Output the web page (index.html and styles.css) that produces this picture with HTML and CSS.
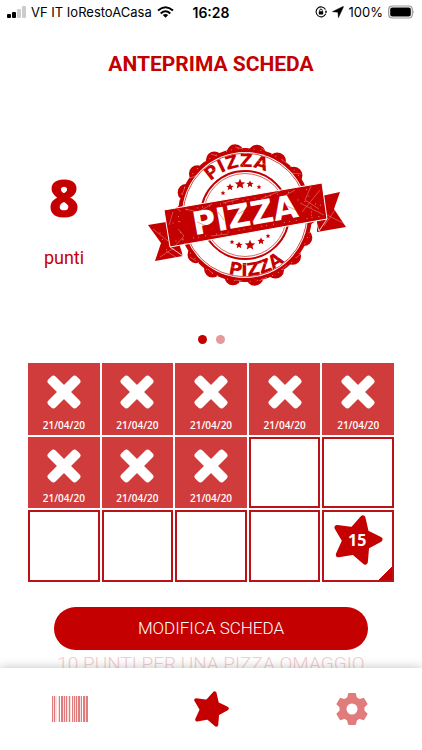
FILE: index.html
```html
<!DOCTYPE html>
<html lang="it">
<head>
    <meta charset="UTF-8">
    <meta name="viewport" content="width=device-width, initial-scale=1.0">
    <title>Anteprima scheda</title>
    <link rel="stylesheet" href="styles.css">
</head>
<body>
    <!-- Shared icons -->
    <svg class="sprite" aria-hidden="true">
        <symbol id="icon-cross" viewBox="0 0 34 34">
            <g transform="rotate(45 17 17)">
                <rect x="-3" y="12" width="40" height="10" rx="3"/>
                <rect x="12" y="-3" width="10" height="40" rx="3"/>
            </g>
        </symbol>
        <symbol id="icon-star" viewBox="0 0 146 150">
            <path d="M86 9 L96 53 L137 73 L97 95 L93 141 L58 111 L13 119 L32 77 L9 38 L55 44 Z" stroke="currentColor" stroke-width="16" stroke-linejoin="round"/>
        </symbol>
    </svg>

    <div class="status-bar">
        <div class="status-left">
            <svg width="19" height="12" viewBox="0 0 19 12">
                <rect x="0" y="8" width="4" height="4" rx="1"/>
                <rect x="5" y="6" width="4" height="6" rx="1"/>
                <rect x="10" y="3" width="4" height="9" rx="1" fill="#ccc"/>
                <rect x="15" y="0" width="4" height="12" rx="1" fill="#ccc"/>
            </svg>
            <span>VF IT IoRestoACasa</span>
            <svg width="17" height="12" viewBox="0 0 17 12" fill="none" stroke="#000" stroke-width="2">
                <path d="M1 4.6 Q8.5 -2 16 4.6" fill="none"/>
                <path d="M3.7 7.4 Q8.5 3.2 13.3 7.4" fill="none"/>
                <path d="M8.5 11.8 L5.8 9 Q8.5 7 11.2 9 Z" fill="#000" stroke="none"/>
            </svg>
        </div>
        <span class="status-time">16:28</span>
        <div class="status-right">
            <svg width="12" height="12" viewBox="0 0 12 12">
                <path d="M10.5 3.5 A5 5 0 1 0 10.7 7.8 M11 4.5 V6.5" fill="none" stroke="#000" stroke-width="1.1"/>
                <path d="M9.8 5.5 H12 L11 7.5 Z"/>
                <rect x="3.8" y="5.3" width="4.4" height="3.3" rx="0.5"/>
                <path d="M4.7 5.5 V4.4 A1.3 1.3 0 0 1 7.3 4.4 V5.5" fill="none" stroke="#000" stroke-width="0.9"/>
            </svg>
            <svg width="12" height="12" viewBox="0 0 11 11">
                <path d="M0.3 5.2 L10 0.5 Q10.7 0.3 10.5 1 L5.900 10.7 L5.4 5.7 Z" stroke="#000" stroke-width="0.4"/>
            </svg>
            <span>100%</span>
            <svg width="27" height="14" viewBox="0 0 27 14">
                <rect x="0.7" y="1" width="23.6" height="12" rx="3.5" fill="#fff" stroke="#999" stroke-width="1.2"/>
                <rect x="2.2" y="2.5" width="20.6" height="9" rx="2"/>
                <path d="M25.5 5 Q27 7 25.5 9 Z" fill="#999"/>
            </svg>
        </div>
    </div>

    <header>
        <h1>ANTEPRIMA SCHEDA</h1>
    </header>

    <main>
        <section class="summary">
            <div class="points">
                <strong>8</strong>
                <span>punti</span>
            </div>
            <svg class="stamp" viewBox="0 0 220 170" role="img" aria-label="Pizza">
                <defs>
                    <path id="arc-top" d="M57 85 A48 48 0 0 1 153 85"/>
                    <path id="arc-bottom" d="M44 85 A61 61 0 0 0 166 85"/>
                    <path id="small-star" d="M0 -4 L1.2 -1.3 L4 -1.2 L1.9 0.6 L2.5 3.5 L0 1.9 L-2.5 3.5 L-1.9 0.6 L-4 -1.2 L-1.2 -1.3 Z"/>
                </defs>
                <!-- Scalloped seal -->
                <circle cx="105" cy="85" r="67"/>
                <circle cx="105" cy="85" r="63" fill="none" stroke="#c40000" stroke-width="17" stroke-linecap="round" pathLength="18" stroke-dasharray="0 1" transform="rotate(1 105 85)"/>
                <circle cx="105" cy="85" r="63" fill="#fff"/>
                <circle cx="105" cy="85" r="61.8" fill="none" stroke="#c40000" stroke-width="0.7"/>
                <circle cx="105" cy="85" r="44" fill="#fff" stroke="#c40000" stroke-width="2"/>
                <circle cx="105" cy="85" r="41.5" fill="none" stroke="#c40000" stroke-width="0.6"/>
                <text class="arc-text" text-anchor="middle" transform="rotate(-10 105 85)"><textPath href="#arc-top" startOffset="50%">PIZZA</textPath></text>
                <text class="arc-text" text-anchor="middle" transform="rotate(-12 105 85)"><textPath href="#arc-bottom" startOffset="50%">PIZZA</textPath></text>
                <use href="#small-star" transform="translate(83 63) scale(.6)"/>
                <use href="#small-star" transform="translate(90 57) scale(.9)"/>
                <use href="#small-star" transform="translate(100 54) scale(1.3)"/>
                <use href="#small-star" transform="translate(110 54) scale(.9)"/>
                <use href="#small-star" transform="translate(119 57) scale(.6)"/>
                <use href="#small-star" transform="translate(92 112) scale(.6)"/>
                <use href="#small-star" transform="translate(99 115) scale(.9)"/>
                <use href="#small-star" transform="translate(110 115) scale(1.3)"/>
                <use href="#small-star" transform="translate(121 111) scale(.9)"/>
                <use href="#small-star" transform="translate(128 106) scale(.6)"/>
                <!-- Ribbon -->
                <path d="M8 95 L32 91 L43 126 L15 131 L21 113 Z"/>
                <path d="M177 67 L200 62 L194 79 L206 97 L177 102 Z"/>
                <path d="M24 80 L182 53 L187 89 L30 117 Z" stroke="#fff" stroke-width="1"/>
                <path d="M30 117 L43 126 L43 115 M187 89 L179 101 L176 91" fill="none" stroke="#fff" stroke-width="0.8"/>
                <text class="ribbon-text" x="107" y="96" text-anchor="middle" transform="rotate(-10 107 96)">PIZZA</text>
                <!-- Worn ink -->
                <g fill="none" stroke="#fff" stroke-width="0.5" opacity="0.6">
                    <path d="M33 82 L29 95 M45 79 L58 82 L72 74 M83 73 L99 69 M35 116 L44 106 L38 99 M71 106 L88 104 M121 69 L140 61 M146 65 L155 60"/>
                    <path d="M162 82 L180 60 M160 73 L184 85 M171 56 L165 70 L179 79 M184 96 L197 77 M187 85 L205 94"/>
                    <path d="M13 99 L28 111 M20 127 L34 118 M26 121 L39 129"/>
                    <path d="M50 48 L58 45 M60 32 L66 25 M71 24 L77 26 M95 17 L103 19 M121 18 L128 22 M142 30 L150 35 M151 43 L161 44 M42 65 L45 57 M50 127 L56 131 M68 139 L73 144 M95 150 L102 151 M119 151 L127 147 M141 140 L147 135 M157 127 L164 122"/>
                    <path d="M68 43 L76 39 M82 29 L87 37 M97 28 L104 36 M116 29 L126 35 M84 132 L96 139 M103 134 L113 138 M121 131 L129 136 M137 127 L144 128"/>
                </g>
                <g fill="none" stroke="#c40000" stroke-width="0.5" opacity="0.7">
                    <path d="M57 92 L69 97 M78 82 L84 90 M98 84 L107 79 M124 88 L134 83 M147 76 L156 80"/>
                </g>
                <g fill="none" stroke="#fff" stroke-linecap="round" stroke-width="0.8" stroke-dasharray="0 7 0 11 0 5" opacity="0.8">
                    <path d="M33 93 L50 90 M36 111 L182 86 M158 70 L184 76 M20 103 L28 123 M40 81 L150 62"/>
                    <circle cx="105" cy="85" r="66.5"/>
                </g>
            </svg>
        </section>

        <div class="pager">
            <button class="dot active" aria-label="Pagina 1"></button>
            <button class="dot" aria-label="Pagina 2"></button>
        </div>

        <section class="card">
            <div class="cell stamped"><svg><use href="#icon-cross"/></svg><span>21/04/20</span></div>
            <div class="cell stamped"><svg><use href="#icon-cross"/></svg><span>21/04/20</span></div>
            <div class="cell stamped"><svg><use href="#icon-cross"/></svg><span>21/04/20</span></div>
            <div class="cell stamped"><svg><use href="#icon-cross"/></svg><span>21/04/20</span></div>
            <div class="cell stamped"><svg><use href="#icon-cross"/></svg><span>21/04/20</span></div>
            <div class="cell stamped"><svg><use href="#icon-cross"/></svg><span>21/04/20</span></div>
            <div class="cell stamped"><svg><use href="#icon-cross"/></svg><span>21/04/20</span></div>
            <div class="cell stamped"><svg><use href="#icon-cross"/></svg><span>21/04/20</span></div>
            <div class="cell"></div>
            <div class="cell"></div>
            <div class="cell"></div>
            <div class="cell"></div>
            <div class="cell"></div>
            <div class="cell"></div>
            <div class="cell prize"><svg><use href="#icon-star"/></svg><span>15</span></div>
        </section>

        <button class="edit-button">MODIFICA SCHEDA</button>
        <p class="reward">10 PUNTI PER UNA PIZZA OMAGGIO</p>
    </main>

    <nav>
        <a href="#codice" aria-label="Codice a barre">
            <svg width="36" height="26" viewBox="0 0 36 26">
                <path d="M0 0h36v26h-36z" opacity="0.25"/>
                <path d="M0 0h1v26h-1z M2 0h1v26h-1z M7 0h1v26h-1z M9 0h2v26h-2z M12 0h1v26h-1z M14 0h1v26h-1z M17 0h1v26h-1z M20 0h1v26h-1z M22 0h1v26h-1z M24 0h1v26h-1z M26 0h2v26h-2z M29 0h1v26h-1z M31 0h2v26h-2z M34 0h2v26h-2z"/>
                <path d="M5 0h1v26h-1z M8 0h1v26h-1z M19 0h1v26h-1z M30 0h1v26h-1z" fill="#fff"/>
            </svg>
        </a>
        <a href="#scheda" class="active" aria-label="Scheda">
            <svg width="35" height="36"><use href="#icon-star"/></svg>
        </a>
        <a href="#impostazioni" aria-label="Impostazioni">
            <svg width="34" height="34" viewBox="-17 -17 34 34">
                <circle r="9" fill="none" stroke="currentColor" stroke-width="7"/>
                <path id="tooth" d="M-5 -11 L-4 -15 Q-4 -16 -3 -16 H3 Q4 -16 4 -15 L5 -11 Z"/>
                <use href="#tooth" transform="rotate(60)"/>
                <use href="#tooth" transform="rotate(120)"/>
                <use href="#tooth" transform="rotate(180)"/>
                <use href="#tooth" transform="rotate(240)"/>
                <use href="#tooth" transform="rotate(300)"/>
            </svg>
        </a>
    </nav>
</body>
</html>
```
FILE: styles.css
```css
* {
    margin: 0;
    padding: 0;
    box-sizing: border-box;
}

body {
    display: flex;
    flex-direction: column;
    height: 100vh;
    font-family: Roboto, 'Liberation Sans', sans-serif;
    color: #c40000;
    background-color: #fff;
}

svg {
    display: block;
    fill: currentColor;
}

button {
    border: none;
    font-family: inherit;
    cursor: pointer;
}

.sprite {
    position: absolute;
    width: 0;
    height: 0;
}

.status-bar {
    display: grid;
    grid-template-columns: 1fr auto 1fr;
    align-items: center;
    height: 24px;
    padding: 0 7px;
    font-family: Inter, sans-serif;
    font-size: 13px;
    color: #000;
}

.status-left,
.status-right {
    display: flex;
    align-items: center;
    gap: 5px;
    white-space: nowrap;
}

.status-right {
    justify-content: flex-end;
    gap: 5px;
}

.status-time {
    font-size: 14px;
    font-weight: 600;
}

header {
    padding: 25px 0 23px;
    text-align: center;
}

h1 {
    font-size: 21px;
    line-height: 30px;
}

main {
    flex: 1;
    min-height: 0;
    padding: 0 28px;
    overflow-y: auto;
    scrollbar-width: none;
}

.summary {
    display: flex;
    align-items: center;
    padding-top: 28px;
}

.points {
    display: flex;
    flex-direction: column;
    align-items: center;
    width: 72px;
    font-size: 18px;
}

.points strong {
    font-family: 'Open Sans', sans-serif;
    font-size: 52px;
    font-weight: 800;
    line-height: 68px;
    margin-bottom: 16px;
}

.stamp {
    width: 220px;
    margin-left: 40px;
    font-family: 'DejaVu Sans', sans-serif;
    font-weight: 700;
}

.arc-text {
    font-size: 18px;
}

.ribbon-text {
    font-size: 32px;
    fill: #fff;
}

.pager {
    display: flex;
    justify-content: center;
    gap: 9px;
    padding: 35px 0 19px;
}

.dot {
    width: 9px;
    height: 9px;
    border-radius: 50%;
    background-color: #e59999;
}

.dot.active {
    background-color: #c40000;
}

.card {
    display: grid;
    grid-template-columns: repeat(5, 1fr);
    gap: 2px;
}

.cell {
    display: flex;
    flex-direction: column;
    align-items: center;
    aspect-ratio: 1;
    border: 2px solid #b91218;
    font-family: 'Open Sans', sans-serif;
}

.cell.stamped {
    justify-content: space-between;
    padding: 10px 0 1px;
    border-color: #d03c3c;
    background-color: #d03c3c;
    color: #fff;
    font-size: 10px;
    font-weight: 600;
    line-height: 14px;
}

.stamped svg {
    width: 34px;
    height: 34px;
}

.cell.prize {
    display: grid;
    place-items: center;
    padding-bottom: 12px;
    background: linear-gradient(135deg, transparent 90%, #c40000 90%);
}

.prize svg,
.prize span {
    grid-area: 1 / 1;
}

.prize svg {
    width: 49px;
    height: 50px;
}

.prize span {
    padding-right: 2px;
    color: #fff;
    font-size: 16px;
    font-weight: 700;
}

.edit-button {
    display: block;
    width: calc(100% - 52px);
    height: 43px;
    margin: 25px auto 0;
    border-radius: 22px;
    background-color: #c40000;
    color: #fff;
    font-size: 17px;
    font-weight: 300;
}

.reward {
    color: #f4cccc;
    font-size: 19px;
    font-weight: 300;
    line-height: 28px;
    text-align: center;
    white-space: nowrap;
}

nav {
    display: flex;
    height: 82px;
    background-color: #fff;
    box-shadow: 0 0 10px rgba(0,0,0,0.25);
    z-index: 1;
}

nav a {
    display: flex;
    flex: 1;
    align-items: center;
    justify-content: center;
    color: #e17c7c;
}

nav a.active {
    color: #c40000;
}
```
